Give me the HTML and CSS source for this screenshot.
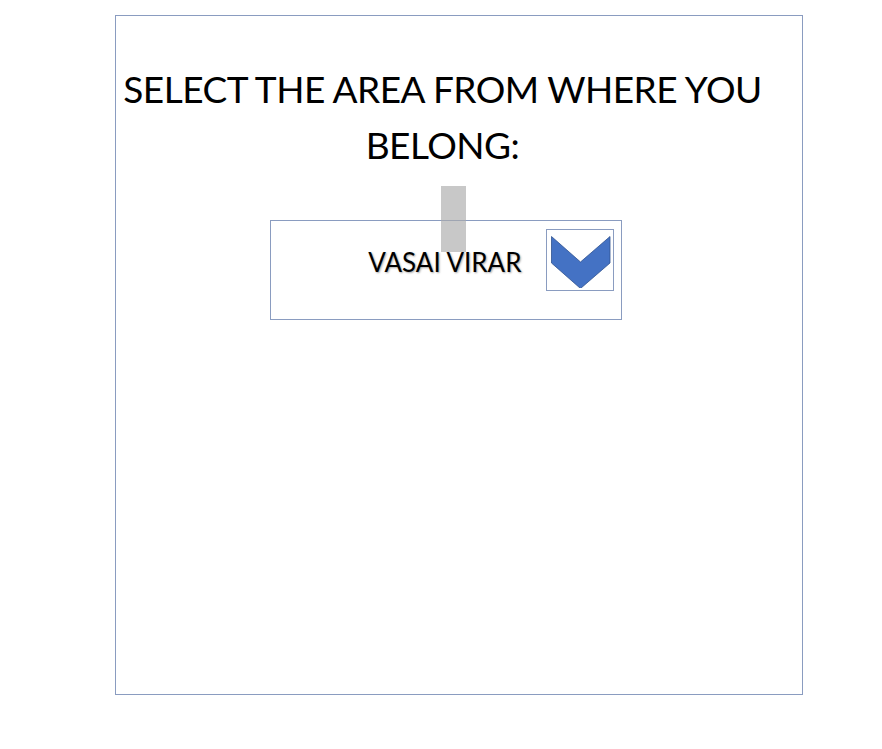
FILE: index.html
```html
<!DOCTYPE html>
<html>
<head>
<meta charset="utf-8">
<link rel="stylesheet" href="styles.css">
</head>
<body>
<div class="frame">
  <h1 class="title">SELECT THE AREA FROM WHERE YOU<br>BELONG:</h1>
  <div class="select-wrap">
    <div class="marker"></div>
    <div class="select">
      <span class="value">VASAI VIRAR</span>
      <div class="arrow-box">
        <svg width="62" height="55" viewBox="0 0 62 55">
          <polygon points="1.5,3.5 30.5,29 60,3.5 60,30 30.5,55.5 1.5,30" fill="#4472c4" stroke="#2f528f" stroke-width="0.8"/>
        </svg>
      </div>
    </div>
  </div>
</div>
</body>
</html>
```
FILE: styles.css
```css
html, body {
  margin: 0;
  padding: 0;
  background: #ffffff;
}
body {
  font-family: "Lato", "Open Sans", sans-serif;
  color: #000;
}
.frame {
  box-sizing: border-box;
  margin: 15px 0 0 115px;
  width: 688px;
  height: 680px;
  border: 1px solid #8a9cc0;
  display: flex;
  flex-direction: column;
  align-items: center;
}
.title {
  margin: 45px 0 0 0;
  padding-right: 33px;
  font-weight: 400;
  font-size: 37px;
  line-height: 56px;
  text-align: center;
  letter-spacing: -0.5px;
  white-space: nowrap;
}
.select-wrap {
  position: relative;
  padding-top: 47px;
  margin-right: 27px;
}
.marker {
  position: absolute;
  left: 171px;
  top: 13px;
  width: 25px;
  height: 66px;
  background: rgba(170, 170, 170, 0.65);
}
.select {
  box-sizing: border-box;
  width: 352px;
  height: 100px;
  border: 1px solid #8a9cc0;
  display: flex;
  align-items: flex-start;
  justify-content: flex-end;
  padding: 8px 7px 0 0;
  gap: 24px;
}
.value {
  margin-top: 16px;
  font-size: 26px;
  line-height: 34px;
  text-shadow: 1px 1px 2px rgba(0,0,0,0.35);
}
.arrow-box {
  box-sizing: border-box;
  width: 68px;
  height: 62px;
  border: 1px solid #8a9cc0;
  padding: 3px 0 0 3px;
}
.arrow-box svg {
  display: block;
}
```
